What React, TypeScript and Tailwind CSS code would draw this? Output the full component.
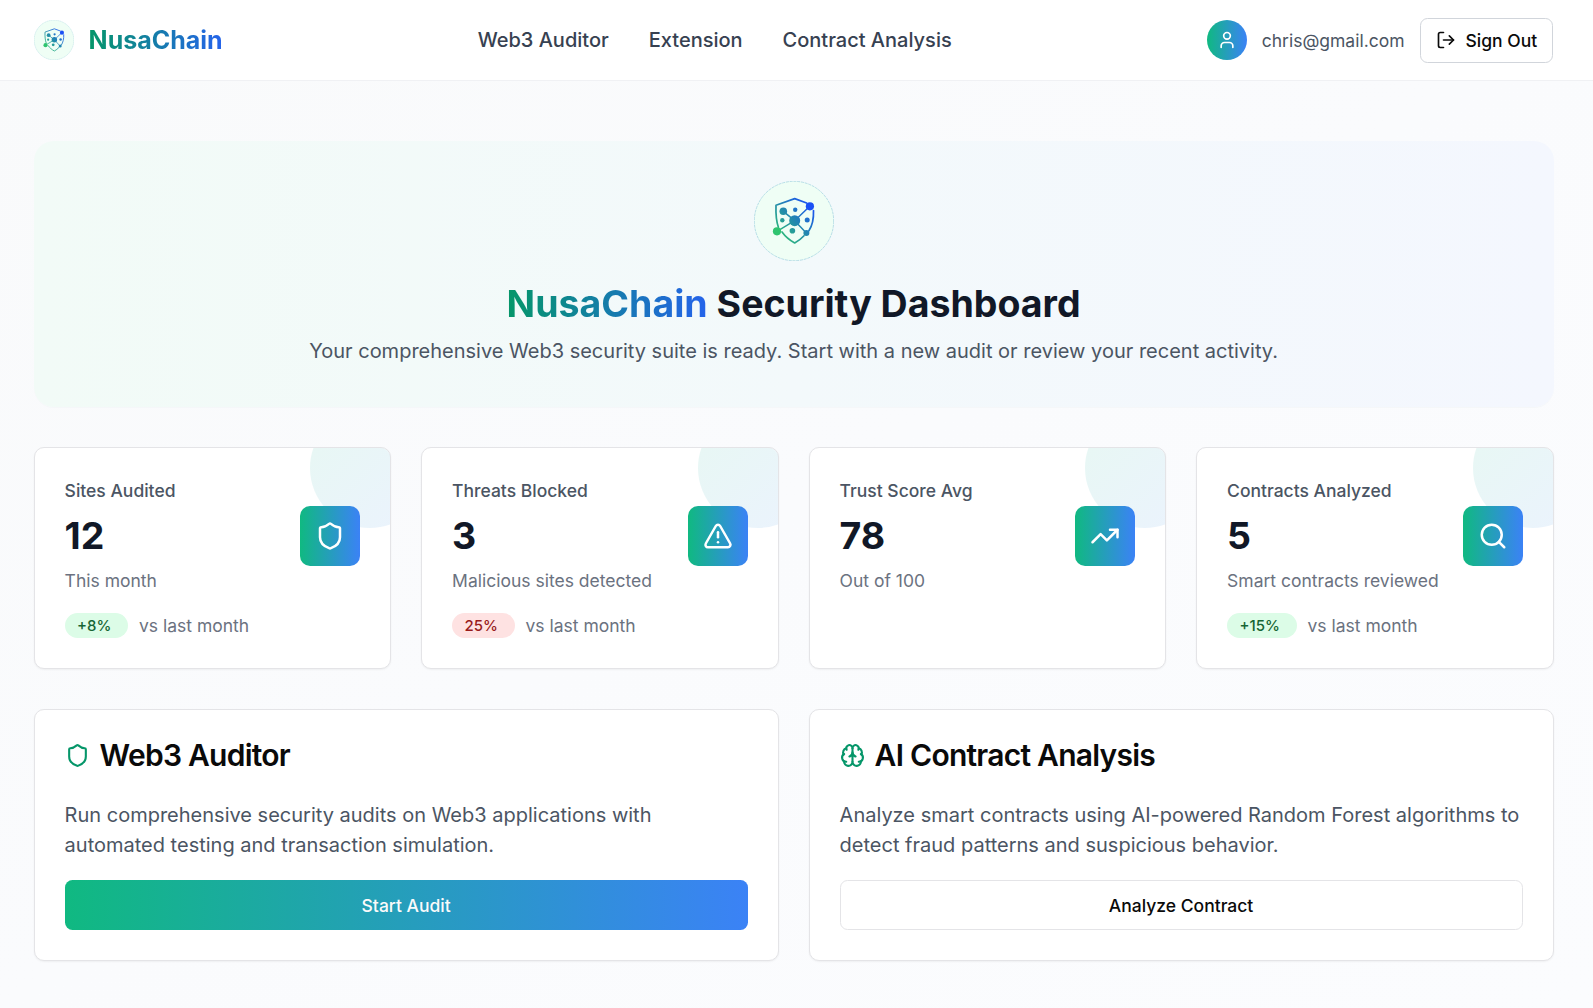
import React from "react";
import {
  AlertTriangle,
  Brain,
  LogOut,
  Search,
  Shield,
  TrendingUp,
  User,
  type LucideIcon,
} from "lucide-react";

function Logo({ className, id }: { className: string; id: string }) {
  const g = `url(#${id})`;
  return (
    <svg viewBox="0 0 80 80" className={className} fill="none">
      <defs>
        <linearGradient id={id} gradientUnits="userSpaceOnUse" x1="22" y1="56" x2="58" y2="24">
          <stop offset="0" stopColor="#2fc46f" />
          <stop offset="0.5" stopColor="#2389ad" />
          <stop offset="1" stopColor="#1b50f5" />
        </linearGradient>
      </defs>
      <circle cx="40" cy="40" r="40" fill="#effef5" />
      <circle cx="40" cy="40" r="39.7" stroke="#9fd0e0" strokeWidth="0.7" strokeDasharray="3 0.8" />
      <g stroke={g} strokeWidth="1.7" strokeLinecap="round" strokeLinejoin="round">
        <path d="M52.6 22 40.7 17.6 22 24.2c-.3 8.5.2 15.8 2.4 22" />
        <path d="M28 51c3.5 4.8 7.6 8.2 12.7 11 3.6-1.9 6.7-4.3 9.3-7.2" />
        <path d="M59.5 29.5c.3 8.2-1.3 15.2-4.6 20.3" />
        <path d="M40.7 39.7 29.3 30.3M40.7 39.7l15-14.4M40.7 39.7 52.3 52M40.7 39.7 23 50.3" strokeWidth="1.5" />
      </g>
      <g fill={g}>
        <circle cx="40.7" cy="39.7" r="5.5" />
        <circle cx="29.3" cy="30.3" r="3.8" />
        <circle cx="41.2" cy="28.7" r="2.2" />
        <circle cx="28.3" cy="39.3" r="2.2" />
        <circle cx="53.2" cy="39" r="2.5" />
        <circle cx="38.4" cy="49.7" r="2.8" />
        <circle cx="52.4" cy="52" r="3" />
      </g>
      <circle cx="55.9" cy="25.3" r="4.1" fill="#1b50f5" />
      <circle cx="23" cy="50.3" r="4.1" fill="#2fc46f" />
    </svg>
  );
}

type Stat = {
  label: string;
  value: string;
  note: string;
  icon: LucideIcon;
  change?: string;
  up?: boolean;
};

const stats: Stat[] = [
  { label: "Sites Audited", value: "12", note: "This month", icon: Shield, change: "+8%", up: true },
  { label: "Threats Blocked", value: "3", note: "Malicious sites detected", icon: AlertTriangle, change: "25%" },
  { label: "Trust Score Avg", value: "78", note: "Out of 100", icon: TrendingUp },
  { label: "Contracts Analyzed", value: "5", note: "Smart contracts reviewed", icon: Search, change: "+15%", up: true },
];

function StatCard({ label, value, note, icon: Icon, change, up }: Stat) {
  return (
    <div className="relative h-[222px] overflow-hidden rounded-[10px] border border-[#e4e4e7] bg-white p-[30px] shadow-[0_1px_2px_0_rgb(0_0_0/0.05)]">
      <div className="absolute -top-10 -right-10 size-[120px] rounded-full bg-linear-to-br/srgb from-[#10b981] to-[#3b82f6] opacity-10" />
      <div className="relative flex items-center justify-between">
        <div>
          <p className="text-[17.5px] leading-[25px] font-medium text-[#4b5563]">{label}</p>
          <p className="mt-2.5 text-[37.5px] leading-[45px] font-bold text-[#111827]">{value}</p>
          <p className="mt-2.5 text-[17.5px] leading-[25px] text-[#6b7280]">{note}</p>
        </div>
        <div className="flex size-[60px] items-center justify-center rounded-[10px] bg-linear-to-r/srgb from-[#10b981] to-[#3b82f6]">
          <Icon className="size-[30px] text-white" />
        </div>
      </div>
      {change && (
        <div className="mt-5 flex items-center gap-[10.5px]">
          <span
            className={
              up
                ? "rounded-full bg-[#dcfce7] py-[2.5px] pr-[17px] pl-[12.5px] text-[15px] leading-5 font-medium text-[#166534]"
                : "rounded-full bg-[#fee2e2] py-[2.5px] pr-[17px] pl-[12.5px] text-[15px] leading-5 font-medium text-[#991b1b]"
            }
          >
            {change}
          </span>
          <span className="text-[17.5px] leading-[25px] text-[#6b7280]">vs last month</span>
        </div>
      )}
    </div>
  );
}

function ActionCard({
  icon: Icon,
  title,
  text,
  action,
  primary,
}: {
  icon: LucideIcon;
  title: string;
  text: string;
  action: string;
  primary?: boolean;
}) {
  return (
    <div className="rounded-[10px] border border-[#e4e4e7] bg-white p-[30px] shadow-[0_1px_2px_0_rgb(0_0_0/0.05)]">
      <h3 className="flex items-center gap-2.5 text-[30px] leading-[30px] font-semibold tracking-tight text-[#0a0a0a]">
        <Icon className="size-[25px] text-[#059669]" />
        {title}
      </h3>
      <p className="mt-[30px] text-[20px] leading-[30px] text-[#4b5563]">{text}</p>
      <button
        className={
          primary
            ? "mt-5 block h-[50px] w-full rounded-[7.5px] bg-linear-to-r/srgb from-[#10b981] to-[#3b82f6] pt-0.5 text-[17.5px] font-medium text-[#fafafa]"
            : "mt-5 block h-[50px] w-full rounded-[7.5px] border border-[#e4e4e7] bg-white pt-0.5 text-[17.5px] font-medium text-[#0a0a0a]"
        }
      >
        {action}
      </button>
    </div>
  );
}

export default function App() {
  return (
    <div className="min-h-[1008px] bg-linear-to-br/srgb from-[#f9fafb] via-[#fafbfd] to-[#fbfcfe] font-['Inter',sans-serif]">
      <header className="h-[81px] border-b border-[#f0f1f4] bg-white">
        <div className="ml-[33.6px] flex h-20 w-[1519.6px] items-center justify-between">
          <div className="flex items-center gap-[15px]">
            <Logo id="logo-small" className="size-10" />
            <span className="bg-linear-to-r/srgb from-[#059669] to-[#2563eb] bg-clip-text text-[25px] leading-[35px] font-bold text-transparent">
              NusaChain
            </span>
          </div>
          <nav className="flex gap-10 text-[20px] leading-[30px] font-medium text-[#374151]">
            <a>Web3 Auditor</a>
            <a>Extension</a>
            <a>Contract Analysis</a>
          </nav>
          <div className="flex items-center gap-[15px]">
            <div className="flex size-10 items-center justify-center rounded-full bg-linear-to-r/srgb from-[#10b981] to-[#3b82f6]">
              <User className="size-5 text-white" />
            </div>
            <span className="text-[17.5px] leading-[25px] text-[#4b5563]">chris@gmail.com</span>
            <button className="flex h-[45px] items-center gap-2.5 rounded-[7.5px] border border-[#d1d5db] bg-white px-[15px] text-[17.5px] font-medium text-[#0a0a0a]">
              <LogOut className="size-5" />
              <span className="leading-[25px]">Sign Out</span>
            </button>
          </div>
        </div>
      </header>
      <main className="ml-[33.6px] w-[1520px] pt-[60px]">
        <section className="flex h-[266px] flex-col items-center rounded-[20px] bg-linear-to-r/srgb from-[#f2fbf7] via-[#f3f9fb] to-[#f4f7fe] pt-10 shadow-[0_1px_0_#f5f7f9]">
          <Logo id="logo-large" className="size-20" />
          <h1 className="mt-5 text-[37.5px] leading-[45px] font-bold text-[#111827]">
            <span className="bg-linear-to-r/srgb from-[#059669] to-[#2563eb] bg-clip-text text-transparent">NusaChain</span>{" "}
            Security Dashboard
          </h1>
          <p className="mt-2.5 text-[20px] leading-[30px] text-[#4b5563]">
            Your comprehensive Web3 security suite is ready. Start with a new audit or review your recent activity.
          </p>
        </section>
        <section className="mt-10 grid grid-cols-4 gap-[30px]">
          {stats.map((s) => (
            <StatCard key={s.label} {...s} />
          ))}
        </section>
        <section className="mt-10 grid grid-cols-2 gap-[30px]">
          <ActionCard
            icon={Shield}
            title="Web3 Auditor"
            text="Run comprehensive security audits on Web3 applications with automated testing and transaction simulation."
            action="Start Audit"
            primary
          />
          <ActionCard
            icon={Brain}
            title="AI Contract Analysis"
            text="Analyze smart contracts using AI-powered Random Forest algorithms to detect fraud patterns and suspicious behavior."
            action="Analyze Contract"
          />
        </section>
      </main>
    </div>
  );
}
